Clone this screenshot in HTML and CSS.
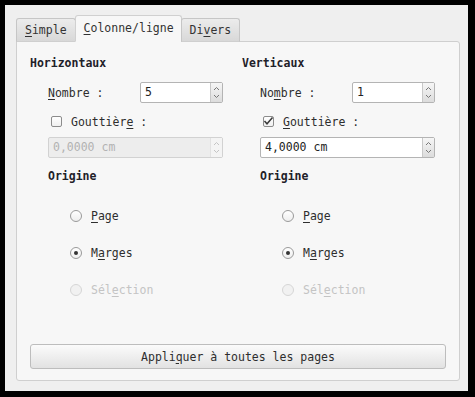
FILE: index.html
```html
<!DOCTYPE html>
<html lang="fr">
<head>
    <meta charset="UTF-8">
    <title>Colonne/ligne</title>
    <link rel="stylesheet" href="styles.css">
</head>
<body>
    <div class="window">
        <div class="tabs">
            <div class="tab"><u>S</u>imple</div>
            <div class="tab active"><u>C</u>olonne/ligne</div>
            <div class="tab">Di<u>v</u>ers</div>
        </div>
        <div class="pane">
            <div class="columns">
                <div class="column">
                    <div class="heading">Horizontaux</div>
                    <div class="row number-row">
                        <span class="label"><u>N</u>ombre :</span>
                        <div class="spin short">
                            <span class="value">5</span>
                            <span class="arrows">
                                <svg width="7" height="5" viewBox="0 0 7 5"><path d="M1 4 L3.5 1.5 L6 4" fill="none" stroke="currentColor" stroke-width="1"/></svg>
                                <svg width="7" height="5" viewBox="0 0 7 5"><path d="M1 1 L3.5 3.5 L6 1" fill="none" stroke="currentColor" stroke-width="1"/></svg>
                            </span>
                        </div>
                    </div>
                    <div class="row check-row">
                        <span class="checkbox"></span>
                        <span>Gouttièr<u>e</u> :</span>
                    </div>
                    <div class="spin wide disabled">
                        <span class="value">0,0000 cm</span>
                        <span class="arrows">
                            <svg width="7" height="5" viewBox="0 0 7 5"><path d="M1 4 L3.5 1.5 L6 4" fill="none" stroke="currentColor" stroke-width="1"/></svg>
                            <svg width="7" height="5" viewBox="0 0 7 5"><path d="M1 1 L3.5 3.5 L6 1" fill="none" stroke="currentColor" stroke-width="1"/></svg>
                        </span>
                    </div>
                    <div class="heading sub">Origine</div>
                    <div class="radios">
                        <div class="radio-row"><span class="radio"></span><span><u>P</u>age</span></div>
                        <div class="radio-row"><span class="radio checked"></span><span>M<u>a</u>rges</span></div>
                        <div class="radio-row disabled"><span class="radio"></span><span>Sél<u>e</u>ction</span></div>
                    </div>
                </div>
                <div class="column">
                    <div class="heading">Verticaux</div>
                    <div class="row number-row">
                        <span class="label">No<u>m</u>bre :</span>
                        <div class="spin short">
                            <span class="value">1</span>
                            <span class="arrows">
                                <svg width="7" height="5" viewBox="0 0 7 5"><path d="M1 4 L3.5 1.5 L6 4" fill="none" stroke="currentColor" stroke-width="1"/></svg>
                                <svg width="7" height="5" viewBox="0 0 7 5"><path d="M1 1 L3.5 3.5 L6 1" fill="none" stroke="currentColor" stroke-width="1"/></svg>
                            </span>
                        </div>
                    </div>
                    <div class="row check-row">
                        <span class="checkbox checked">
                            <svg width="11" height="11" viewBox="0 0 11 11"><path d="M1.5 5 L4 7.8 L9.5 1.5" fill="none" stroke="#3a3a3a" stroke-width="1.5"/></svg>
                        </span>
                        <span><u>G</u>outtière :</span>
                    </div>
                    <div class="spin wide">
                        <span class="value">4,0000 cm</span>
                        <span class="arrows">
                            <svg width="7" height="5" viewBox="0 0 7 5"><path d="M1 4 L3.5 1.5 L6 4" fill="none" stroke="currentColor" stroke-width="1"/></svg>
                            <svg width="7" height="5" viewBox="0 0 7 5"><path d="M1 1 L3.5 3.5 L6 1" fill="none" stroke="currentColor" stroke-width="1"/></svg>
                        </span>
                    </div>
                    <div class="heading sub">Origine</div>
                    <div class="radios">
                        <div class="radio-row"><span class="radio"></span><span><u>P</u>age</span></div>
                        <div class="radio-row"><span class="radio checked"></span><span>M<u>a</u>rges</span></div>
                        <div class="radio-row disabled"><span class="radio"></span><span>Sél<u>e</u>ction</span></div>
                    </div>
                </div>
            </div>
            <button class="apply">Appli<u>q</u>uer à toutes les pages</button>
        </div>
    </div>
</body>
</html>
```

FILE: styles.css
```css
body {
    margin: 0;
    padding: 5px 0 0 5px;
    background-color: #000;
    font-family: "DejaVu Sans Mono", monospace;
    font-size: 11.5px;
    color: #2e2e2e;
}
u {
    text-underline-offset: 2px;
}
.window {
    width: 444px;
    height: 365px;
    padding: 11px 8px 10px 11px;
    background-color: #efefef;
    display: flex;
    flex-direction: column;
}
.tabs {
    display: flex;
    align-items: flex-end;
    height: 26px;
    margin-bottom: -1px;
    position: relative;
    z-index: 1;
}
.tab {
    height: 22px;
    line-height: 23px;
    padding: 0 8px;
    border: 1px solid #c6c6c6;
    border-bottom-color: #cfcfcf;
    border-radius: 3px 3px 0 0;
    background: linear-gradient(#ececec, #d8d8d8);
    color: #333;
}
.tab + .tab {
    margin-left: -1px;
}
.tab.active {
    height: 25px;
    line-height: 25px;
    background: #f7f7f7;
    border-color: #d0d0d0;
    border-bottom-color: #f7f7f7;
    padding: 0 7px 0 8px;
}
.pane {
    flex: 1;
    background-color: #f7f7f7;
    border: 1px solid #cfcfcf;
    border-radius: 0 3px 3px 3px;
    padding: 13px 13px 11px 13px;
    display: flex;
    flex-direction: column;
}
.columns {
    display: grid;
    grid-template-columns: 1fr 1fr;
    gap: 8px;
}
.column {
    display: flex;
    flex-direction: column;
}
.heading {
    font-weight: bold;
    line-height: 16px;
    color: #1f2129;
}
.heading.sub {
    margin: 10px 0 0 18px;
}
.row {
    display: flex;
    align-items: center;
    height: 21px;
}
.number-row {
    margin: 11px 0 0 18px;
}
.label {
    width: 92px;
}
.check-row {
    margin: 8px 0 0 21px;
}
.checkbox {
    width: 11px;
    height: 11px;
    box-sizing: border-box;
    border: 1px solid #8c8c8c;
    border-radius: 2px;
    background: linear-gradient(#ffffff, #f0f0f0);
    margin-right: 9px;
    display: flex;
    align-items: center;
    justify-content: center;
    overflow: visible;
}
.checkbox.checked svg {
    flex: none;
}
.spin {
    display: flex;
    height: 21px;
    box-sizing: border-box;
    border: 1px solid #b4b4b4;
    border-radius: 2px;
    background-color: #fff;
    color: #222;
}
.spin.short {
    width: 83px;
}
.spin.wide {
    width: 175px;
    margin: 5px 0 0 18px;
}
.spin .value {
    flex: 1;
    line-height: 19px;
    padding-left: 4px;
}
.arrows {
    width: 11px;
    border-left: 1px solid #c8c8c8;
    background: linear-gradient(#f6f6f6, #dcdcdc);
    display: flex;
    flex-direction: column;
    align-items: center;
    justify-content: space-around;
    padding: 2px 0;
    color: #777;
}
.spin.disabled {
    background-color: #ededed;
    border-color: #d2d2d2;
    color: #b2b2b2;
}
.spin.disabled .arrows {
    background: #f4f4f4;
    border-left-color: #e2e2e2;
    color: #c4c4c4;
}
.radios {
    display: flex;
    flex-direction: column;
    gap: 15px;
    margin: 21px 0 0 40px;
}
.radio-row {
    display: flex;
    align-items: center;
    height: 22px;
}
.radio {
    width: 12px;
    height: 12px;
    box-sizing: border-box;
    border: 1px solid #9a9a9a;
    border-radius: 50%;
    background: linear-gradient(#ffffff, #eeeeee);
    margin-right: 9px;
    display: flex;
    align-items: center;
    justify-content: center;
}
.radio.checked::after {
    content: "";
    width: 4px;
    height: 4px;
    border-radius: 50%;
    background-color: #333;
}
.radio-row.disabled {
    color: #c4c4c4;
}
.radio-row.disabled .radio {
    border-color: #d6d6d6;
    background: #f1f1f1;
}
.apply {
    margin-top: auto;
    height: 25px;
    border: 1px solid #bdbdbd;
    border-radius: 3px;
    background: linear-gradient(#fbfbfb, #e2e2e2);
    font-family: "DejaVu Sans Mono", monospace;
    font-size: 11.5px;
    color: #2e2e2e;
    padding: 0;
}
```
